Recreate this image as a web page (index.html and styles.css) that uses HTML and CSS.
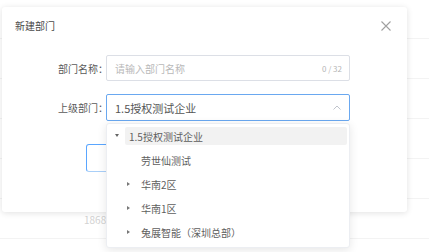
FILE: index.html
```html
<!DOCTYPE html>
<html lang="zh">
<head>
<meta charset="utf-8">
<link rel="stylesheet" href="styles.css">
</head>
<body>
<div class="page">
  <div class="bg-row"></div>
  <div class="bg-row"></div>
  <div class="bg-row"></div>
  <div class="bg-row"></div>
  <div class="bg-row"></div>
  <div class="bg-row"><span class="bg-phone">18688888888</span></div>
</div>

<div class="modal">
  <div class="modal-header">
    <span class="modal-title">新建部门</span>
    <svg class="close" width="10" height="10" viewBox="0 0 10 10"><path d="M0.5 0.5L9.5 9.5M9.5 0.5L0.5 9.5" stroke="#a0a0a0" stroke-width="1.1" fill="none"/></svg>
  </div>
  <div class="form">
    <div class="form-row">
      <label class="form-label">部门名称：</label>
      <div class="input">
        <span class="placeholder">请输入部门名称</span>
        <span class="count">0 / 32</span>
      </div>
    </div>
    <div class="form-row">
      <label class="form-label">上级部门：</label>
      <div class="input focus">
        <span class="value">1.5授权测试企业</span>
        <svg class="arrow" width="8" height="5" viewBox="0 0 8 5"><path d="M0.5 4.5L4 1L7.5 4.5" stroke="#c0c4cc" stroke-width="1" fill="none"/></svg>
      </div>
    </div>
    <div class="buttons">
      <div class="btn primary-outline"></div>
      <div class="btn"></div>
    </div>
  </div>
</div>

<div class="dropdown">
  <div class="node">
    <span class="caret down"></span>
    <span class="label active">1.5授权测试企业</span>
  </div>
  <div class="node lvl1">
    <span class="caret none"></span>
    <span class="label">劳世仙测试</span>
  </div>
  <div class="node lvl1">
    <span class="caret right"></span>
    <span class="label">华南2区</span>
  </div>
  <div class="node lvl1">
    <span class="caret right"></span>
    <span class="label">华南1区</span>
  </div>
  <div class="node lvl1">
    <span class="caret right"></span>
    <span class="label">兔展智能（深圳总部）</span>
  </div>
</div>
</body>
</html>
```

FILE: styles.css
```css
* { box-sizing: border-box; }
html, body {
  margin: 0;
  padding: 0;
  background: #fff;
  width: 429px;
  height: 252px;
  overflow: hidden;
  font-family: "Noto Sans CJK SC", "Noto Sans", sans-serif;
  font-size: 10px;
  color: #606266;
}
.page {
  margin-top: -1px;
}
.bg-row {
  height: 40px;
  border-bottom: 1px solid #f3f3f3;
  display: flex;
  align-items: center;
  padding-left: 84px;
}
.bg-phone {
  color: #d2d2d2;
  font-size: 10px;
  margin-top: 1px;
}

.modal {
  position: absolute;
  left: 2px;
  top: 7px;
  width: 405px;
  height: 205px;
  background: #fff;
  border-radius: 3px;
  box-shadow: 0 1px 6px rgba(0, 0, 0, 0.12);
  display: flex;
  flex-direction: column;
}
.modal-header {
  display: flex;
  align-items: center;
  justify-content: space-between;
  padding: 12px 16px 0 13px;
  height: 26px;
}
.modal-title {
  font-size: 10px;
  line-height: 14px;
  color: #4a4a4a;
}
.close { display: block; }

.form {
  margin-top: 22px;
  display: flex;
  flex-direction: column;
  gap: 13px;
}
.form-row {
  display: flex;
  align-items: center;
}
.form-label {
  width: 106px;
  text-align: right;
  color: #5a5a5a;
  font-size: 10px;
  flex: none;
}
.input {
  margin-left: -2px;
  width: 244px;
  height: 26px;
  border: 1px solid #dcdfe6;
  border-radius: 2px;
  display: flex;
  align-items: center;
  justify-content: space-between;
  padding: 0 7px 0 8px;
}
.input.focus {
  height: 27px;
  border-color: #6aa8f0;
}
.placeholder { color: #b9b9b9; font-size: 10px; }
.count { color: #b5b5b5; font-size: 8px; }
.value { color: #555; font-size: 11px; }
.arrow { display: block; margin-right: 1px; }

.buttons {
  margin-top: 10px;
  display: flex;
  padding-left: 84px;
  gap: 10px;
}
.btn {
  width: 64px;
  height: 28px;
  border: 1px solid #dcdfe6;
  border-radius: 3px;
}
.btn.primary-outline {
  border-color: #5aa6ff;
  border-bottom-color: #a9cff8;
}

.dropdown {
  position: absolute;
  left: 106px;
  top: 123px;
  width: 244px;
  height: 125px;
  background: #fff;
  border: 1px solid #eceef2;
  border-radius: 3px;
  box-shadow: 0 2px 10px rgba(0, 0, 0, 0.1);
  display: flex;
  flex-direction: column;
}
.node {
  height: 24px;
  display: flex;
  align-items: center;
  padding-left: 4px;
}
.node.lvl1 { padding-left: 15px; }
.caret {
  width: 14px;
  height: 10px;
  flex: none;
  position: relative;
}
.caret.down::after {
  content: "";
  position: absolute;
  left: 4px;
  top: 3px;
  border-left: 2.5px solid transparent;
  border-right: 2.5px solid transparent;
  border-top: 3.5px solid #666;
}
.caret.right::after {
  content: "";
  position: absolute;
  left: 5px;
  top: 2.5px;
  border-top: 2.5px solid transparent;
  border-bottom: 2.5px solid transparent;
  border-left: 3.5px solid #777;
}
.label {
  height: 18px;
  display: flex;
  align-items: center;
  padding-left: 4px;
  font-size: 10px;
  color: #5e5e5e;
  flex: 1;
  margin-right: 2px;
}
.label.active {
  background: #f2f2f2;
  border-radius: 2px;
}
.node.lvl1 .label { padding-left: 5px; }
```
